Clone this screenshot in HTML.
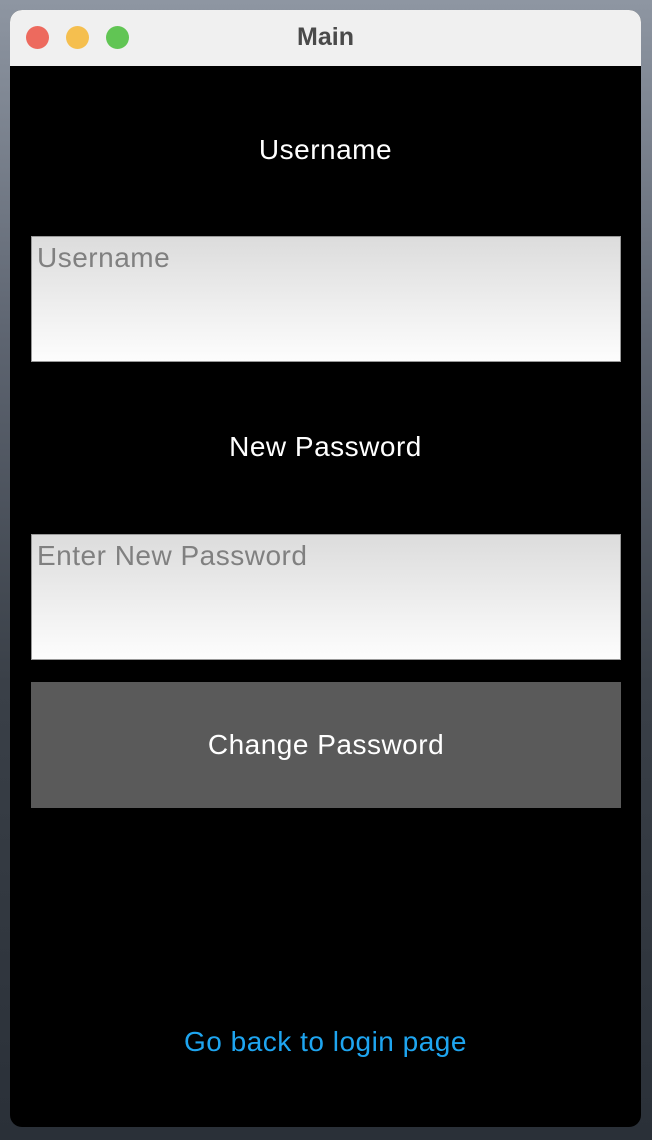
<!DOCTYPE html>
<html><head><style>
body{margin:0;width:652px;height:1140px;overflow:hidden;background:linear-gradient(180deg,#8e96a2 0%,#5d6470 30%,#3a4048 60%,#2a3038 100%);font-family:"Liberation Sans",sans-serif;position:relative}
.win{position:absolute;left:10px;top:10px;width:631px;height:1117px;background:#000;border-radius:12px;overflow:hidden}
.tb{height:56px;background:#f0f0f0;position:relative}
.tb .t{position:absolute;left:0;right:0;top:13px;text-align:center;font-size:25px;font-weight:bold;color:#4a4a4a}
.d{position:absolute;top:16px;width:23px;height:23px;border-radius:50%}
.lbl{position:absolute;left:0;right:0;text-align:center;color:#fff;font-size:28px;letter-spacing:0.5px}
.f{position:absolute;left:21px;width:590px;height:126px;border:1px solid #999;background:linear-gradient(#dcdcdc,#fdfdfd);color:#808080;font-size:28px;letter-spacing:0.5px;box-sizing:border-box;padding:5px 0 0 5px}
.btn{position:absolute;left:21px;top:672px;width:590px;height:126px;background:#5a5a5a;color:#fff;font-size:28px;letter-spacing:0.5px;text-align:center;line-height:126px}
</style></head><body>
<div class="win">
<div class="tb"><div class="d" style="left:16px;background:#ed6a5e"></div><div class="d" style="left:56px;background:#f5bf4f"></div><div class="d" style="left:96px;background:#61c554"></div><div class="t">Main</div></div>
<div class="lbl" style="top:124px">Username</div>
<div class="f" style="top:226px">Username</div>
<div class="lbl" style="top:421px">New Password</div>
<div class="f" style="top:524px">Enter New Password</div>
<div class="btn">Change Password</div>
<div class="lbl" style="top:1016px;color:#1ea5f0">Go back to login page</div>
</div>
</body></html>
